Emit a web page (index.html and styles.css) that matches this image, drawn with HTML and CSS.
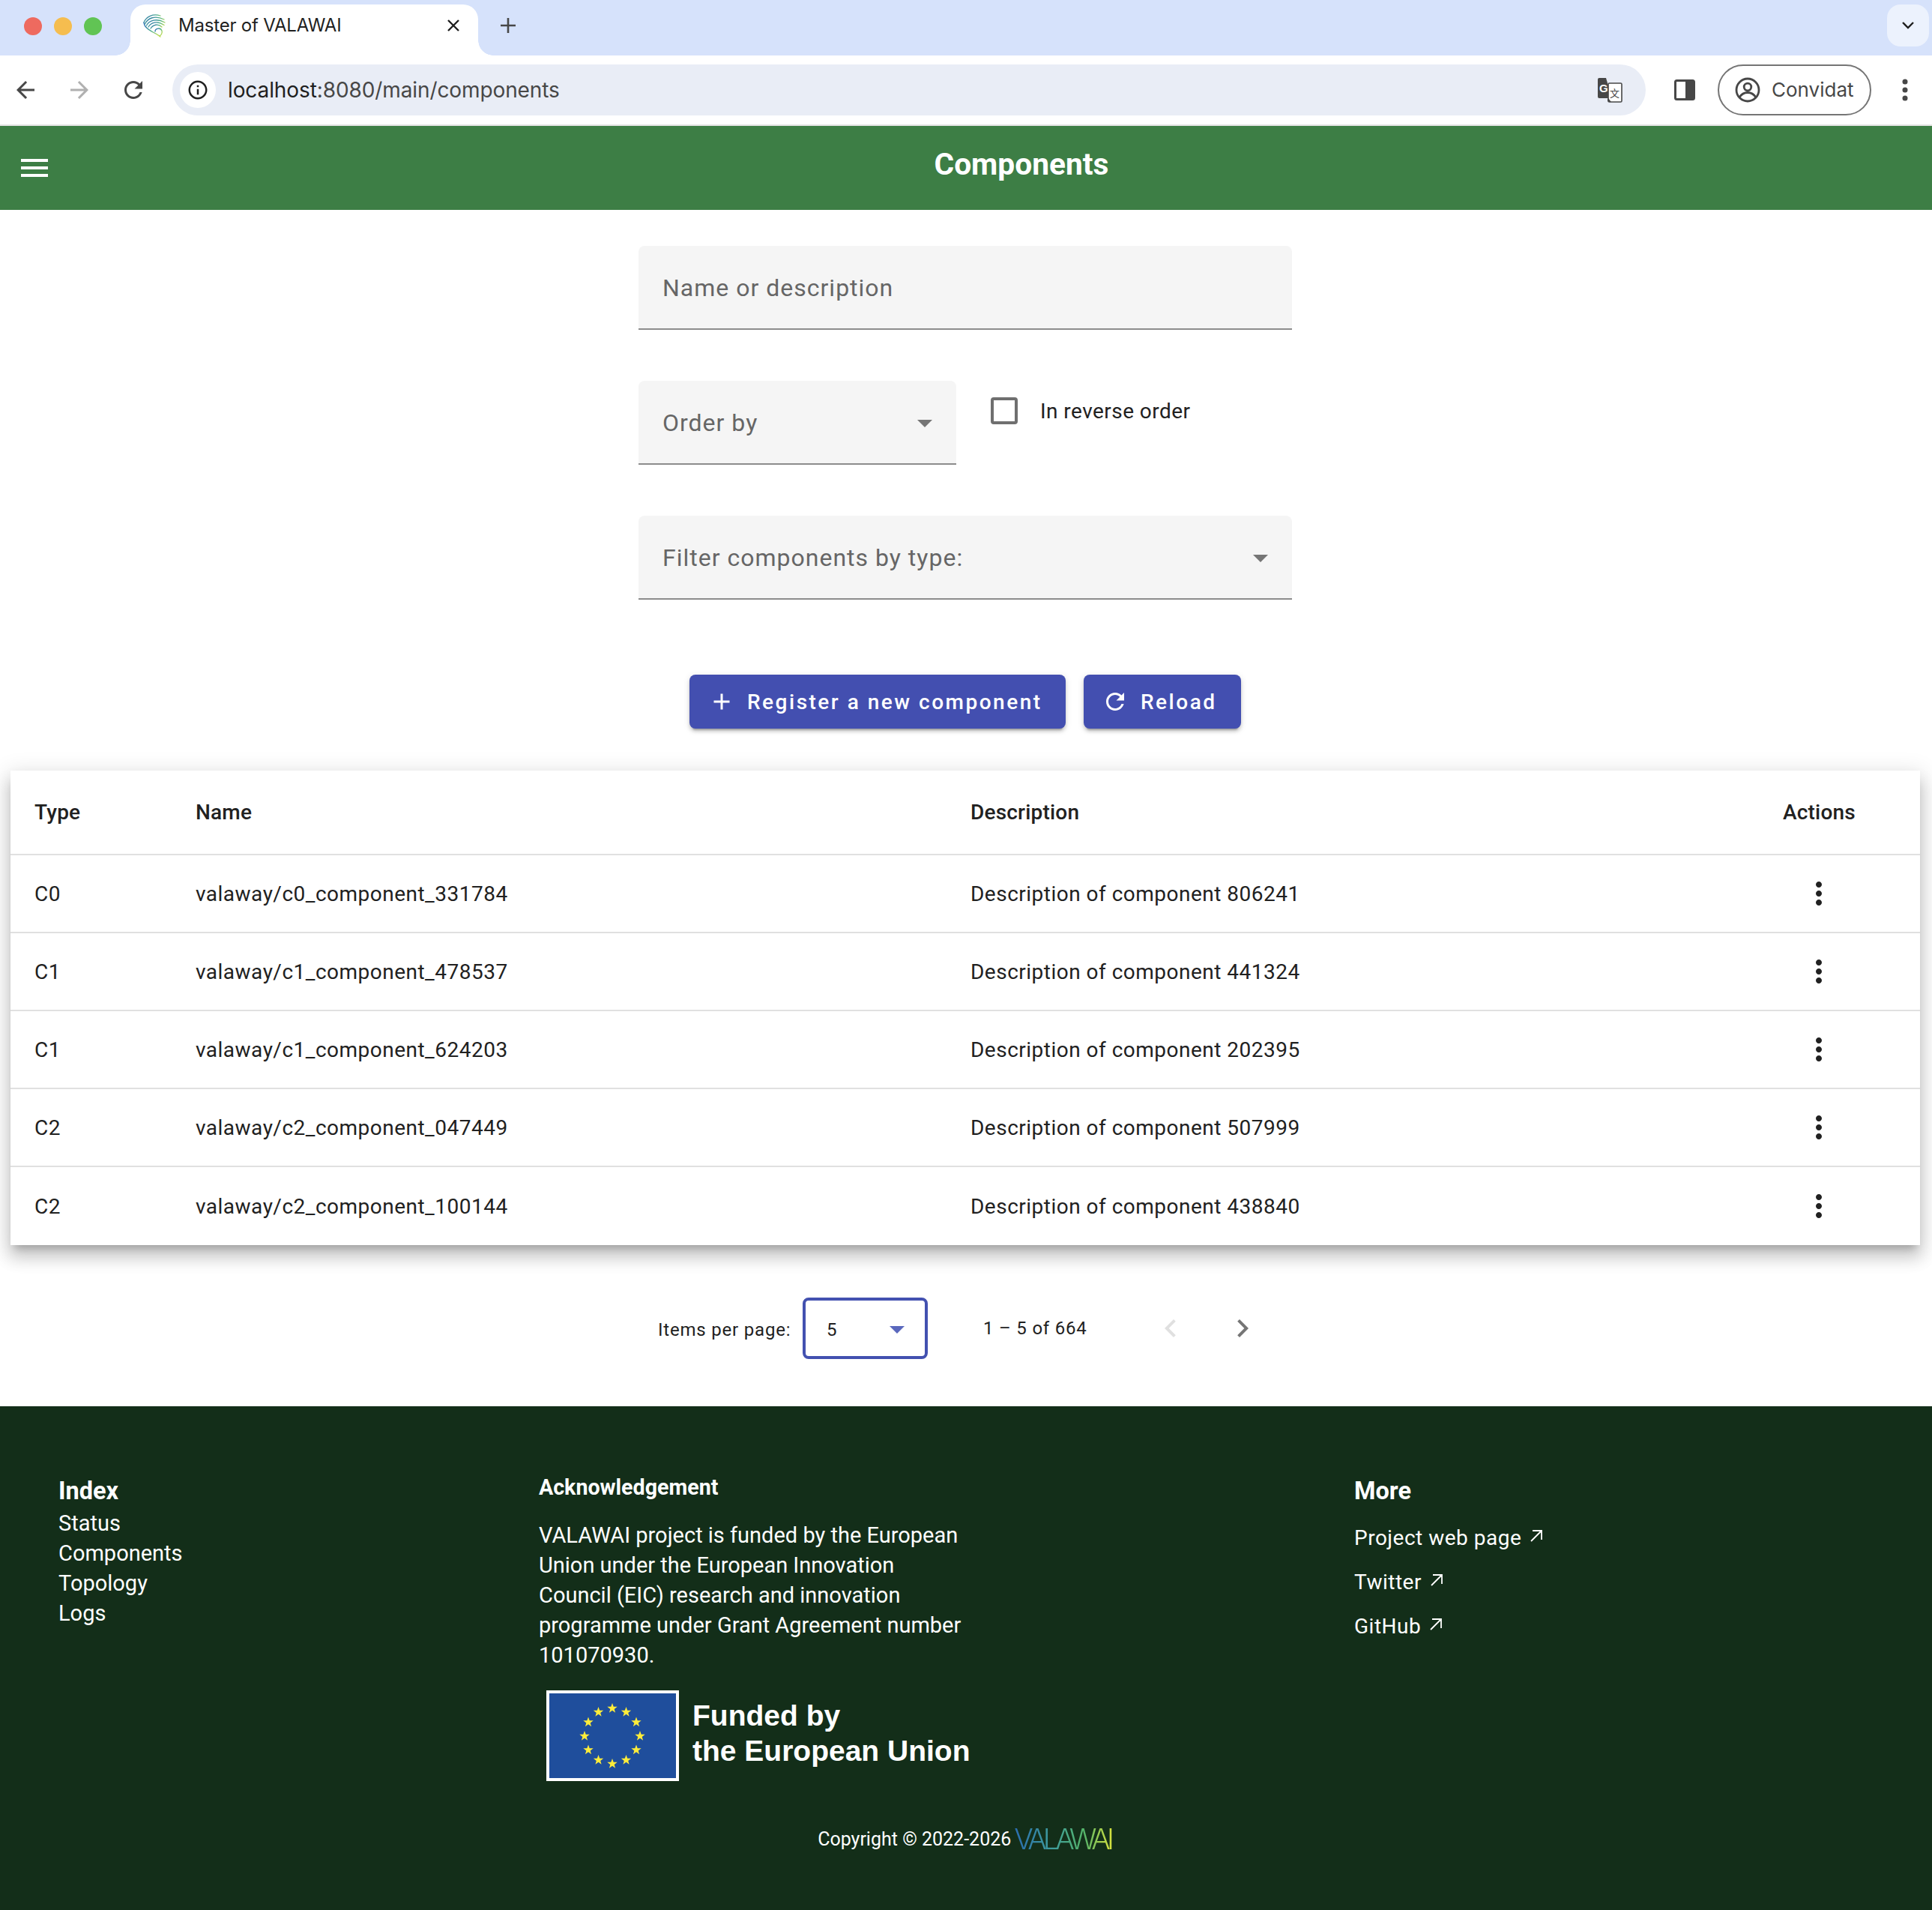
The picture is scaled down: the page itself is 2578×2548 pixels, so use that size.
FILE: index.html
```html
<!DOCTYPE html>
<html lang="en">
<head>
<meta charset="utf-8">
<title>Master of VALAWAI</title>
<link rel="stylesheet" href="styles.css">
</head>
<body>
<div class="tabstrip">
  <div class="lights"><span class="light red"></span><span class="light yellow"></span><span class="light green"></span></div>
  <div class="tab">
    <svg class="favicon" viewBox="0 0 32 32" fill="none" stroke="url(#fav)" stroke-width="1.300" stroke-linecap="round">
      <defs><linearGradient id="fav" x1="0" y1="0.2" x2="1" y2="0.8"><stop offset="0" stop-color="#2b6fb5"/><stop offset=".5" stop-color="#4fb08c"/><stop offset="1" stop-color="#c4e04a"/></linearGradient></defs>
      <path d="M2 12C5 4 14 0 24 3"/>
      <path d="M3.500 14C7 6 17 2 29 8"/>
      <path d="M5.500 16C9 9 19 6 30 12"/>
      <path d="M8 18C11 12 20 9 29 15.500"/>
      <path d="M11 20C14 15 21 13 26 18"/>
      <path d="M2 12C2 19 12 24 18 27C21 29 23 30 24 31"/>
      <path d="M17 24C17 20 24 18 26 23C27 26 25 29 23 30"/>
    </svg>
    <span class="tab-title">Master of VALAWAI</span>
    <svg class="tab-close" viewBox="0 0 16 16" fill="none" stroke="#1f1f1f" stroke-width="2.400"><path d="M1 1l14 14M15 1L1 15"/></svg>
  </div>
  <svg class="new-tab" viewBox="0 0 20 20" fill="none" stroke="#474747" stroke-width="2.600"><path d="M10 0v20M0 10h20"/></svg>
  <div class="tab-menu"><svg class="tab-chevron" viewBox="0 0 16 10" fill="none" stroke="#1f1f1f" stroke-width="2.400"><path d="M1 1l7 7 7-7"/></svg></div>
</div>
<div class="browserbar">
  <svg class="nav-btn" viewBox="0 0 24 24" fill="#474747"><path d="M20 11H7.83l5.59-5.59L12 4l-8 8 8 8 1.41-1.41L7.83 13H20v-2z"/></svg>
  <svg class="nav-btn" viewBox="0 0 24 24" fill="#b0b0b0"><path d="M12 4l-1.41 1.41L16.17 11H4v2h12.17l-5.58 5.59L12 20l8-8z"/></svg>
  <svg class="nav-btn nav-last" viewBox="0 0 24 24" fill="#474747"><path d="M17.65 6.35C16.2 4.9 14.21 4 12 4c-4.42 0-7.99 3.58-7.99 8s3.57 8 7.99 8c3.73 0 6.84-2.55 7.73-6h-2.08c-.82 2.33-3.04 4-5.65 4-3.31 0-6-2.69-6-6s2.69-6 6-6c1.66 0 3.14.69 4.22 1.78L13 11h7V4l-2.35 2.35z"/></svg>
  <div class="omnibox">
    <span class="site-info"><svg class="site-icon" viewBox="0 0 24 24" fill="#1f1f1f"><path d="M11 7h2v2h-2zm0 4h2v6h-2zm1-9C6.48 2 2 6.48 2 12s4.48 10 10 10 10-4.48 10-10S17.52 2 12 2zm0 18c-4.41 0-8-3.59-8-8s3.59-8 8-8 8 3.59 8 8-3.59 8-8 8z"/></svg></span>
    <span class="url"><span class="url-host">localhost</span>:8080/main/components</span>
    <svg class="translate" viewBox="0 0 34 34">
      <path d="M1 3q0-2 2-2h9l8 27H3q-2 0-2-2z" fill="#474747"/>
      <rect x="15" y="8" width="18" height="25" rx="1.5" fill="#fff" stroke="#474747" stroke-width="1.6"/>
      <path d="M15 28l4 5h-3q-2 0-2-3z" fill="#474747"/>
      <text class="translate-g" x="3" y="20">G</text>
      <text class="translate-zh" x="17" y="26">文</text>
    </svg>
  </div>
  <svg class="side-panel" viewBox="0 0 28 28"><rect x="1.500" y="1.500" width="25" height="25" rx="2" fill="#fff" stroke="#474747" stroke-width="3"/><rect x="15" y="1" width="12" height="26" fill="#474747"/></svg>
  <div class="guest">
    <svg class="guest-icon" viewBox="0 0 34 34" fill="none" stroke="#474747" stroke-width="2.800"><circle cx="17" cy="17" r="15"/><circle cx="17" cy="13" r="4.800"/><path d="M6 27c3-5 7-6.500 11-6.500s8 1.500 11 6.500"/></svg>
    <span>Convidat</span>
  </div>
  <svg class="browser-kebab" viewBox="0 0 8 30" fill="#474747"><circle cx="4" cy="4" r="3.500"/><circle cx="4" cy="15" r="3.500"/><circle cx="4" cy="26" r="3.500"/></svg>
</div>

<header class="appbar">
  <svg class="menu-icon" viewBox="0 0 24 24" fill="#fff"><path d="M3 18h18v-2H3v2zm0-5h18v-2H3v2zm0-7v2h18V6H3z"/></svg>
  <h1 class="app-title">Components</h1>
</header>

<main>
  <form class="filters">
    <div class="field"><span class="field-label">Name or description</span></div>
    <div class="filter-row">
      <div class="field field-short"><span class="field-label">Order by</span><span class="arrow field-arrow"></span></div>
      <label class="check"><span class="checkbox"></span>In reverse order</label>
    </div>
    <div class="field"><span class="field-label">Filter components by type:</span><span class="arrow field-arrow"></span></div>
    <div class="actions">
      <button type="button" class="btn btn-register"><svg class="btn-icon" viewBox="0 0 24 24" fill="#fff"><path d="M19 13h-6v6h-2v-6H5v-2h6V5h2v6h6v2z"/></svg><span class="btn-label">Register a new component</span></button>
      <button type="button" class="btn btn-reload"><svg class="btn-icon" viewBox="0 0 24 24" fill="#fff"><path d="M17.650 6.350C16.200 4.900 14.210 4 12 4c-4.420 0-7.990 3.580-7.990 8s3.570 8 7.990 8c3.730 0 6.840-2.550 7.730-6h-2.080c-.82 2.330-3.040 4-5.650 4-3.310 0-6-2.690-6-6s2.690-6 6-6c1.660 0 3.140.69 4.220 1.780L13 11h7V4l-2.350 2.350z"/></svg><span class="btn-label">Reload</span></button>
    </div>
  </form>

  <table class="components">
    <colgroup><col class="c-type"><col class="c-name"><col class="c-desc"><col class="c-act"></colgroup>
    <thead><tr><th>Type</th><th>Name</th><th>Description</th><th>Actions</th></tr></thead>
    <tbody>
      <tr><td>C0</td><td>valaway/c0_component_331784</td><td>Description of component 806241</td><td><svg class="kebab" viewBox="0 0 24 24"><path d="M12 8c1.100 0 2-.9 2-2s-.9-2-2-2-2 .9-2 2 .9 2 2 2zm0 2c-1.100 0-2 .9-2 2s.9 2 2 2 2-.9 2-2-.9-2-2-2zm0 6c-1.100 0-2 .9-2 2s.9 2 2 2 2-.9 2-2-.9-2-2-2z"/></svg></td></tr>
      <tr><td>C1</td><td>valaway/c1_component_478537</td><td>Description of component 441324</td><td><svg class="kebab" viewBox="0 0 24 24"><path d="M12 8c1.100 0 2-.9 2-2s-.9-2-2-2-2 .9-2 2 .9 2 2 2zm0 2c-1.100 0-2 .9-2 2s.9 2 2 2 2-.9 2-2-.9-2-2-2zm0 6c-1.100 0-2 .9-2 2s.9 2 2 2 2-.9 2-2-.9-2-2-2z"/></svg></td></tr>
      <tr><td>C1</td><td>valaway/c1_component_624203</td><td>Description of component 202395</td><td><svg class="kebab" viewBox="0 0 24 24"><path d="M12 8c1.100 0 2-.9 2-2s-.9-2-2-2-2 .9-2 2 .9 2 2 2zm0 2c-1.100 0-2 .9-2 2s.9 2 2 2 2-.9 2-2-.9-2-2-2zm0 6c-1.100 0-2 .9-2 2s.9 2 2 2 2-.9 2-2-.9-2-2-2z"/></svg></td></tr>
      <tr><td>C2</td><td>valaway/c2_component_047449</td><td>Description of component 507999</td><td><svg class="kebab" viewBox="0 0 24 24"><path d="M12 8c1.100 0 2-.9 2-2s-.9-2-2-2-2 .9-2 2 .9 2 2 2zm0 2c-1.100 0-2 .9-2 2s.9 2 2 2 2-.9 2-2-.9-2-2-2zm0 6c-1.100 0-2 .9-2 2s.9 2 2 2 2-.9 2-2-.9-2-2-2z"/></svg></td></tr>
      <tr><td>C2</td><td>valaway/c2_component_100144</td><td>Description of component 438840</td><td><svg class="kebab" viewBox="0 0 24 24"><path d="M12 8c1.100 0 2-.9 2-2s-.9-2-2-2-2 .9-2 2 .9 2 2 2zm0 2c-1.100 0-2 .9-2 2s.9 2 2 2 2-.9 2-2-.9-2-2-2zm0 6c-1.100 0-2 .9-2 2s.9 2 2 2 2-.9 2-2-.9-2-2-2z"/></svg></td></tr>
    </tbody>
  </table>

  <div class="paginator">
    <span class="per-page">Items per page:</span>
    <div class="page-size"><span>5</span><span class="arrow arrow-accent"></span></div>
    <span class="range">1 – 5 of 664</span>
    <svg class="page-btn page-prev" viewBox="0 0 24 24" fill="#e0e0e0"><path d="M15.410 7.410L14 6l-6 6 6 6 1.410-1.410L10.830 12z"/></svg>
    <svg class="page-btn page-next" viewBox="0 0 24 24" fill="#757575"><path d="M10 6L8.590 7.410 13.170 12l-4.580 4.590L10 18l6-6z"/></svg>
  </div>
</main>

<footer class="site-footer">
  <div class="footer-cols">
    <nav class="col-index">
      <h2 class="foot-head">Index</h2>
      <a>Status</a><a>Components</a><a>Topology</a><a>Logs</a>
    </nav>
    <section class="col-ack">
      <h3 class="ack-head">Acknowledgement</h3>
      <p class="ack-text">VALAWAI project is funded by the European Union under the European Innovation Council (EIC) research and innovation programme under Grant Agreement number 101070930.</p>
      <div class="funded">
        <svg class="flag" viewBox="0 0 177 121">
          <defs><polygon id="star" points="0,-7 1.700,-2.200 6.700,-2.200 2.700,.9 4.100,5.700 0,2.800 -4.100,5.700 -2.700,.9 -6.700,-2.200 -1.700,-2.200" fill="#ffed3a"/></defs>
          <rect width="177" height="121" fill="#fff"/>
          <rect x="4" y="4" width="169" height="113" fill="#1f4e9c"/>
          <use href="#star" x="88" y="24"/><use href="#star" x="106.500" y="29"/><use href="#star" x="120" y="42.500"/><use href="#star" x="125" y="61"/><use href="#star" x="120" y="79.500"/><use href="#star" x="106.500" y="93"/><use href="#star" x="88" y="98"/><use href="#star" x="69.500" y="93"/><use href="#star" x="56" y="79.500"/><use href="#star" x="51" y="61"/><use href="#star" x="56" y="42.500"/><use href="#star" x="69.500" y="29"/>
        </svg>
        <div class="funded-text">Funded by<br>the European Union</div>
      </div>
    </section>
    <nav class="col-more">
      <h2 class="foot-head">More</h2>
      <a>Project web page<svg class="ext" viewBox="0 0 16 16" fill="none" stroke="#fff" stroke-width="1.800"><path d="M1 15L15 1M3 1h12v12"/></svg></a>
      <a>Twitter<svg class="ext" viewBox="0 0 16 16" fill="none" stroke="#fff" stroke-width="1.800"><path d="M1 15L15 1M3 1h12v12"/></svg></a>
      <a>GitHub<svg class="ext" viewBox="0 0 16 16" fill="none" stroke="#fff" stroke-width="1.800"><path d="M1 15L15 1M3 1h12v12"/></svg></a>
    </nav>
  </div>
  <div class="copyright"><span>Copyright © 2022-2026</span><span class="brand">VALAWAI</span></div>
</footer>
</body>
</html>
```

FILE: styles.css
```css
* { box-sizing: border-box; }
html, body { margin: 0; padding: 0; }
body { width: 2578px; background: #fff; font-family: Roboto, "Liberation Sans", sans-serif; color: #212121; overflow-x: hidden; }

/* browser chrome */
.tabstrip { position: relative; display: flex; height: 74px; background: #d6e2fb; }
.lights { display: flex; gap: 16px; padding: 23px 0 0 32px; width: 174px; }
.light { width: 24px; height: 24px; border-radius: 50%; }
.red { background: #ee6a5f; }
.yellow { background: #f5bd4f; }
.green { background: #61c454; }
.tab { position: relative; display: flex; align-items: flex-start; width: 464px; height: 68px; margin-top: 6px; padding: 12px 0 0 16px; background: #fff; border-radius: 20px 20px 0 0; }
.tab::before, .tab::after { content: ""; position: absolute; bottom: 0; width: 20px; height: 20px; }
.tab::before { left: -20px; background: radial-gradient(circle at 0 0, transparent 19.500px, #fff 20px); }
.tab::after { right: -20px; background: radial-gradient(circle at 100% 0, transparent 19.500px, #fff 20px); }
.favicon { width: 32px; height: 32px; }
.tab-title { margin-left: 16px; width: 358px; font: 400 24px/32px Inter, sans-serif; letter-spacing: -.2px; color: #1f1f1f; white-space: nowrap; }
.tab-close { width: 16px; height: 16px; margin: 8px 0 0 1px; }
.new-tab { width: 20px; height: 20px; margin: 24px 0 0 30px; }
.tab-menu { display: flex; align-items: center; justify-content: center; width: 56px; height: 56px; margin: 6px 4px 0 auto; background: #ecf2fd; border-radius: 18px; }
.tab-chevron { width: 16px; height: 10px; }

.browserbar { display: flex; align-items: center; height: 94px; padding: 0 32px 0 16px; background: #fff; border-bottom: 2px solid #e3e3e3; border-radius: 8px 8px 0 0; }
.nav-btn { width: 36px; height: 36px; margin-right: 36px; flex: none; }
.nav-last { margin-right: 34px; }
.omnibox { flex: 1; display: flex; align-items: center; height: 68px; padding: 0 31px 0 10px; background: #e9edf6; border-radius: 34px; }
.site-info { display: flex; align-items: center; justify-content: center; width: 48px; height: 48px; background: #fff; border-radius: 50%; }
.site-icon { width: 30px; height: 30px; }
.url { margin-left: 16px; font: 400 28px/1 Inter, sans-serif; letter-spacing: -.1px; color: #474747; }
.url-host { color: #1f1f1f; }
.translate { margin-left: auto; width: 34px; height: 34px; }
.translate-g { font: 700 15px "Liberation Sans", sans-serif; fill: #fff; }
.translate-zh { font: 400 13px "Noto Sans CJK SC", sans-serif; fill: #474747; }
.side-panel { width: 28px; height: 28px; margin-left: 38px; flex: none; }
.guest { display: flex; align-items: center; width: 205px; height: 68px; margin-left: 30px; padding-left: 21px; border: 2px solid #757575; border-radius: 34px; font: 400 26px/1 Inter, sans-serif; color: #474747; flex: none; }
.guest-icon { width: 34px; height: 34px; margin-right: 15px; }
.browser-kebab { width: 8px; height: 30px; margin-left: 41px; flex: none; }

/* app bar */
.appbar { display: flex; align-items: center; height: 112px; padding-left: 22px; background: #3d7e45; }
.menu-icon { width: 48px; height: 48px; flex: none; }
.app-title { flex: 1; margin: 0 0 10px; padding-left: 78px; text-align: center; font-size: 40.700px; font-weight: 700; line-height: 48px; color: #fff; }

/* filter form */
.filters { display: flex; flex-direction: column; width: 872px; margin: 48px 0 0 852px; }
.field { display: flex; align-items: center; justify-content: space-between; height: 112px; margin-bottom: 68px; padding: 0 32px; background: #f5f5f5; border-bottom: 2px solid #8c8c8c; border-radius: 8px 8px 0 0; font-size: 32px; letter-spacing: 1px; color: #666; }
.field-label { padding-top: 2px; }
.field-short { width: 424px; margin-bottom: 0; flex: none; }
.filter-row { display: flex; align-items: flex-start; margin-bottom: 68px; }
.arrow { width: 0; height: 0; border-left: 10px solid transparent; border-right: 10px solid transparent; border-top: 10px solid #757575; }
.field-arrow { margin-top: 3px; }
.arrow-accent { border-top-color: #5a68bd; }
.check { display: flex; align-items: center; margin: 22px 0 0 46px; font-size: 28px; letter-spacing: .45px; color: #212121; }
.checkbox { width: 36px; height: 36px; margin-right: 30px; border: 4px solid #6f6f6f; border-radius: 4px; }
.actions { display: flex; gap: 24px; margin: 32px 0 0 68px; }
.btn { display: flex; align-items: center; height: 72px; border: 0; border-radius: 8px; background: #434fb0; color: #fff; font: 500 28px/1 Roboto, sans-serif; letter-spacing: 2.500px; box-shadow: 0 6px 2px -4px rgba(0,0,0,.2), 0 4px 4px 0 rgba(0,0,0,.14), 0 2px 10px 0 rgba(0,0,0,.12); }
.btn-label { padding-top: 2px; }
.btn-register { width: 502px; padding: 0 0 0 25px; }
.btn-reload { width: 210px; padding: 0 0 0 24px; }
.btn-icon { width: 36px; height: 36px; margin-right: 16px; flex: none; }

/* table */
.components { width: 2548px; margin: 56px 16px 0 14px; border-collapse: separate; border-spacing: 0; table-layout: fixed; background: #fff; box-shadow: 0 10px 10px -6px rgba(0,0,0,.2), 0 16px 20px 2px rgba(0,0,0,.14), 0 6px 28px 4px rgba(0,0,0,.12); font-size: 28px; letter-spacing: .49px; }
.c-type { width: 215px; }
.c-name { width: 1034px; }
.c-desc { width: 1084px; }
.c-act { width: 215px; }
th { height: 113px; padding: 0 32px; text-align: left; font-weight: 500; letter-spacing: .2px; border-bottom: 2px solid #e0e0e0; }
td { height: 104px; padding: 0 32px; border-bottom: 2px solid #e0e0e0; }
tbody tr:last-child td { border-bottom: 0; }
.kebab { display: block; width: 48px; height: 48px; margin-left: 24px; fill: #212121; }

/* paginator */
.paginator { display: flex; align-items: center; height: 82px; margin: 70px 0 0 878px; font-size: 24px; letter-spacing: .8px; }
.per-page { width: 176px; padding-top: 4px; white-space: nowrap; }
.page-size { display: flex; align-items: center; justify-content: space-between; width: 167px; height: 82px; margin-left: 17px; padding: 4px 27px 0 28px; border: 4px solid #4351b0; border-radius: 8px; }
.range { margin-left: 74px; width: 137px; white-space: nowrap; }
.page-btn { width: 48px; height: 48px; }
.page-prev { margin-left: 89px; }
.page-next { margin-left: 48px; }

/* footer */
.site-footer { margin-top: 63px; height: 672px; padding-top: 88px; background: #132e19; color: #fff; }
.footer-cols { display: grid; grid-template-columns: 641px 1088px 1fr; padding-left: 78px; height: 413px; }
.site-footer a { display: block; }
.col-index { padding-top: 2px; font-size: 29px; line-height: 40px; }
.foot-head { margin: 0; height: 46px; font-size: 32.500px; line-height: 46px; font-weight: 700; }
.ack-head { margin: 0 0 24px; font-size: 28.600px; line-height: 40px; font-weight: 700; }
.ack-text { width: 570px; margin: 0; font-size: 29px; line-height: 40px; }
.funded { display: flex; align-items: flex-start; margin: 27px 0 0 10px; }
.flag { width: 177px; height: 121px; flex: none; }
.funded-text { margin: 10px 0 0 18px; font: 700 39px/47px "Liberation Sans", sans-serif; white-space: nowrap; }
.col-more { padding-top: 2px; font-size: 28px; letter-spacing: .5px; }
.col-more .foot-head { letter-spacing: 0; margin-bottom: 10px; }
.col-more a { display: flex; align-items: center; height: 59px; }
.ext { width: 16px; height: 16px; margin: -6px 0 0 12px; }
.copyright { display: flex; align-items: center; justify-content: center; height: 40px; margin-top: 56px; font-size: 25px; white-space: pre; }
.brand { margin-left: 4px; font: 300 38px/40px Inter, sans-serif; letter-spacing: -5px; padding-right: 5px; background: linear-gradient(90deg, #2a6cb0, #3f9e9a 40%, #55b468 70%, #e3e63a); -webkit-background-clip: text; background-clip: text; color: transparent; }
```
